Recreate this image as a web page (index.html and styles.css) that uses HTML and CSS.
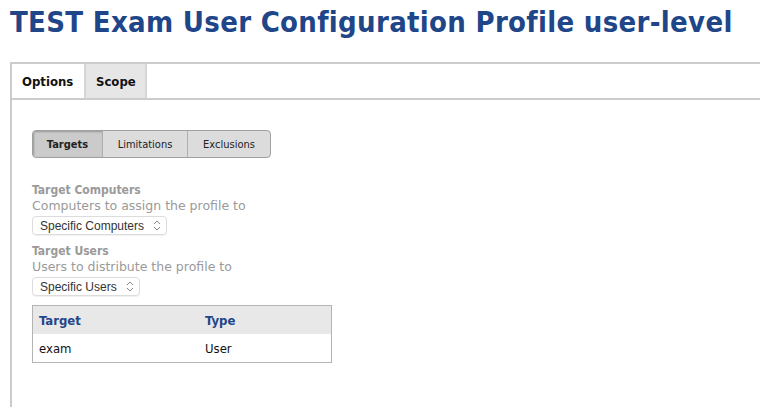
FILE: index.html
```html
<!DOCTYPE html>
<html>
<head>
<meta charset="utf-8">
<link rel="stylesheet" href="styles.css">
</head>
<body>
<h1 class="title">TEST Exam User Configuration Profile user-level</h1>
<div class="panel">
  <div class="tabs">
    <div class="tab active">Options</div>
    <div class="tab">Scope</div>
  </div>
  <div class="content">
    <div class="seg">
      <div class="seg-btn on">Targets</div>
      <div class="seg-btn">Limitations</div>
      <div class="seg-btn">Exclusions</div>
    </div>
    <div class="field">
      <div class="label">Target Computers</div>
      <div class="desc">Computers to assign the profile to</div>
      <div class="select">Specific Computers <span class="arrows"><svg width="8" height="11" viewBox="0 0 8 11"><path d="M1 4 L4 1 L7 4 M1 7 L4 10 L7 7" fill="none" stroke="#888" stroke-width="1"/></svg></span></div>
    </div>
    <div class="field">
      <div class="label">Target Users</div>
      <div class="desc">Users to distribute the profile to</div>
      <div class="select">Specific Users <span class="arrows"><svg width="8" height="11" viewBox="0 0 8 11"><path d="M1 4 L4 1 L7 4 M1 7 L4 10 L7 7" fill="none" stroke="#888" stroke-width="1"/></svg></span></div>
    </div>
    <table class="grid">
      <thead><tr><th class="c1">Target</th><th>Type</th></tr></thead>
      <tbody><tr><td>exam</td><td>User</td></tr></tbody>
    </table>
  </div>
</div>
</body>
</html>
```
FILE: styles.css
```css
html, body { margin: 0; padding: 0; background: #fff; }
body { font-family: "DejaVu Sans Condensed", "DejaVu Sans", sans-serif; overflow: hidden; height: 407px; }
.title {
  margin: 0;
  padding: 5px 0 0 10px;
  height: 62px;
  box-sizing: border-box;
  font-size: 29px;
  letter-spacing: 0.3px;
  font-weight: bold;
  color: #1f4689;
  white-space: nowrap;
}
.panel {
  margin-left: 10px;
  border-top: 2px solid #cccccc;
  border-left: 2px solid #cccccc;
  height: 343px;
}
.tabs {
  display: flex;
  height: 34px;
  border-bottom: 2px solid #cccccc;
}
.tab {
  font-family: "DejaVu Sans Condensed", sans-serif;
  font-size: 13px;
  font-weight: bold;
  color: #111;
  display: flex;
  align-items: center;
  padding: 0 10px;
  border-right: 2px solid #d6d6d6;
  background: #e6e6e6;
}
.tab.active { background: #fff; width: 52px; }
.tab:not(.active) { width: 39px; }
.content { padding: 30px 0 0 20px; }
.seg {
  display: inline-flex;
  border: 1px solid #a0a0a0;
  border-radius: 4px;
  overflow: hidden;
  height: 26px;
  background: #dcdcdc;
}
.seg-btn {
  font-family: "DejaVu Sans Condensed", sans-serif;
  font-size: 11px;
  color: #222;
  display: flex;
  align-items: center;
  justify-content: center;
  border-left: 1px solid #b0b0b0;
}
.seg-btn:nth-child(1) { width: 69px; border-left: none; background: #cbcbcb; box-shadow: inset 1px 1px 2px rgba(0,0,0,0.25); font-weight: bold; }
.seg-btn:nth-child(2) { width: 84px; }
.seg-btn:nth-child(3) { width: 82px; }
.field { margin-top: 8px; }
.seg + .field { margin-top: 24px; }
.label {
  font-size: 12px;
  font-weight: bold;
  color: #9a9a9a;
  line-height: 16px;
}
.desc {
  font-family: "DejaVu Sans", sans-serif;
  font-size: 12.5px;
  color: #9a9a9a;
  line-height: 16px;
}
.select {
  display: inline-flex;
  align-items: center;
  margin-top: 2px;
  height: 17px;
  padding: 0 5px 0 7px;
  border: 1px solid #dcdcdc;
  border-radius: 4px;
  font-family: "Liberation Sans", Arial, sans-serif;
  font-size: 12px;
  color: #333;
  box-shadow: 0 1px 1px rgba(0,0,0,0.06);
}
.arrows { margin-left: 9px; display: flex; }
.grid {
  margin-top: 9px;
  width: 300px;
  border-collapse: collapse;
  border: 1px solid #b4b4b4;
  font-size: 13px;
}
.grid th {
  background: #e8e8e8;
  color: #1f4689;
  text-align: left;
  font-weight: bold;
  height: 28px;
  padding: 0 6px;
}
.grid th.c1 { width: 154px; }
.grid td {
  color: #111;
  height: 28px;
  padding: 0 6px;
}
```
